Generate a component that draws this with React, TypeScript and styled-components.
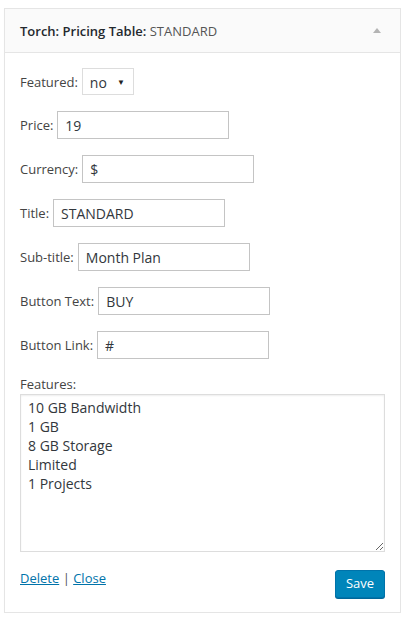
import styled, { createGlobalStyle } from "styled-components";

const GlobalStyle = createGlobalStyle`
  body {
    margin: 0;
    background: #fff;
    font-family: "Open Sans", "Liberation Sans", sans-serif;
  }
`;

const Page = styled.div`
  padding: 8px 0 0 4px;
`;

const Widget = styled.div`
  width: 397px;
  box-sizing: border-box;
  border: 1px solid #e5e5e5;
  box-shadow: 0 1px 1px rgba(0, 0, 0, 0.04);
  background: #fff;
`;

const WidgetTop = styled.div`
  height: 43px;
  display: flex;
  align-items: center;
  justify-content: space-between;
  padding: 0 15px;
  background: #fafafa;
  border-bottom: 1px solid #e5e5e5;
`;

const WidgetTitle = styled.h3`
  margin: 0;
  font-size: 13px;
  font-weight: 600;
  color: #23282d;
`;

const InWidgetTitle = styled.span`
  font-weight: 400;
  color: #555;
`;

const Toggle = styled.span`
  width: 0;
  height: 0;
  margin-right: 4px;
  border-left: 4px solid transparent;
  border-right: 4px solid transparent;
  border-bottom: 5px solid #b4b4b4;
`;

const WidgetInside = styled.div`
  padding: 15px 15px 14px;
  display: flex;
  flex-direction: column;
  gap: 16px;
`;

const Field = styled.div`
  display: flex;
  align-items: center;
  gap: 4px;
  font-size: 13px;
  color: #444;
`;

const Select = styled.div`
  width: 52px;
  height: 27px;
  box-sizing: border-box;
  border: 1px solid #ddd;
  display: flex;
  align-items: center;
  justify-content: space-between;
  padding: 2px 8px 0 7px;
  font-size: 14px;
  color: #32373c;
  background: #fff;
  &::after {
    content: "▼";
    font-size: 8px;
    color: #222;
    margin-top: -3px;
  }
`;

const TextInput = styled.input`
  width: 172px;
  height: 28px;
  box-sizing: border-box;
  border: 1px solid #c4c4c4;
  padding: 0 7px;
  font-family: "Open Sans", "Liberation Sans", sans-serif;
  font-size: 14px;
  color: #32373c;
  outline: none;
  margin: 0;
`;

const FeatureBlock = styled.div`
  display: flex;
  flex-direction: column;
  font-size: 13px;
  color: #444;
`;

const FeatureLabel = styled.label`
  line-height: 19px;
`;

const TextArea = styled.textarea`
  width: 365px;
  height: 158px;
  box-sizing: border-box;
  border: 1px solid #ddd;
  box-shadow: inset 0 1px 2px rgba(0, 0, 0, 0.07);
  padding: 3px 7px;
  font-family: "Open Sans", "Liberation Sans", sans-serif;
  font-size: 14px;
  line-height: 19px;
  color: #32373c;
  margin: 0;
  outline: none;
`;

const Actions = styled.div`
  display: flex;
  justify-content: space-between;
  align-items: flex-start;
  margin-top: 2px;
`;

const Links = styled.div`
  font-size: 13px;
  line-height: 18px;
  color: #555;
  margin-top: -1px;
`;

const Link = styled.a`
  color: #0073aa;
  text-decoration: underline;
`;

const SaveButton = styled.button`
  width: 50px;
  height: 28px;
  border: 1px solid #0073aa;
  border-radius: 3px;
  background: #0085ba;
  box-shadow: 0 1px 0 #006799;
  color: #fff;
  font-family: "Open Sans", "Liberation Sans", sans-serif;
  font-size: 13px;
  padding: 0 0 2px;
`;

const fields = [
  { label: "Price:", value: "19" },
  { label: "Currency:", value: "$" },
  { label: "Title:", value: "STANDARD" },
  { label: "Sub-title:", value: "Month Plan" },
  { label: "Button Text:", value: "BUY" },
  { label: "Button Link:", value: "#" },
];

const features = ["10 GB Bandwidth", "1 GB", "8 GB Storage", "Limited", "1 Projects"].join("\n");

export default function App() {
  return (
    <Page>
      <GlobalStyle />
      <Widget>
        <WidgetTop>
          <WidgetTitle>
            Torch: Pricing Table: <InWidgetTitle>STANDARD</InWidgetTitle>
          </WidgetTitle>
          <Toggle />
        </WidgetTop>
        <WidgetInside>
          <Field>
            Featured: <Select>no</Select>
          </Field>
          {fields.map((f) => (
            <Field key={f.label}>
              {f.label} <TextInput defaultValue={f.value} />
            </Field>
          ))}
          <FeatureBlock>
            <FeatureLabel>Features:</FeatureLabel>
            <TextArea defaultValue={features} />
          </FeatureBlock>
          <Actions>
            <Links>
              <Link href="#">Delete</Link> | <Link href="#">Close</Link>
            </Links>
            <SaveButton>Save</SaveButton>
          </Actions>
        </WidgetInside>
      </Widget>
    </Page>
  );
}
